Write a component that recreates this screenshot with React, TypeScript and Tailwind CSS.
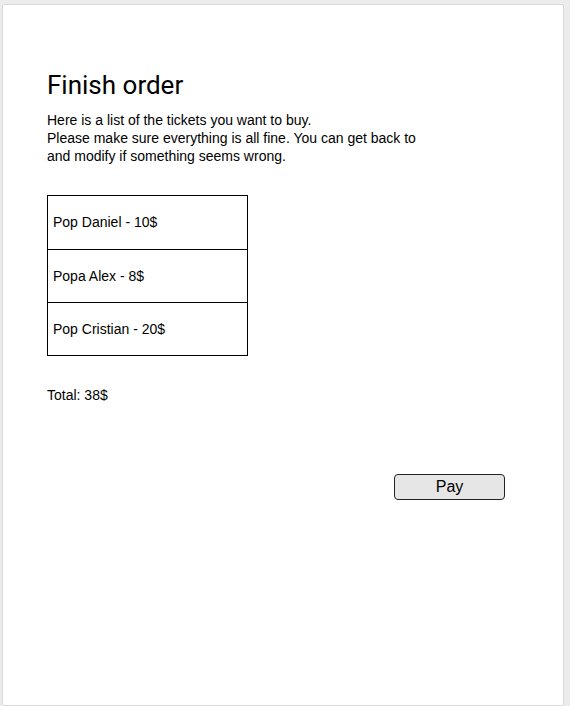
import React from 'react'

const tickets = [
  { name: 'Pop Daniel', price: 10 },
  { name: 'Popa Alex', price: 8 },
  { name: 'Pop Cristian', price: 20 },
]

export default function App(): React.ReactElement {
  const total = tickets.reduce((s, t) => s + t.price, 0)
  return (
    <div className="w-[570px] h-[706px] bg-[#ececec] pt-[4px] pl-[2px]" style={{ fontFamily: '"Liberation Sans", Arial, sans-serif' }}>
      <div className="w-[562px] h-[702px] bg-white border border-[#d9d9d9] rounded-[2px] pl-[44px] pt-[65px] text-black">
        <h1 className="text-[26px] leading-[30px] font-normal" style={{ fontFamily: 'Roboto, "Liberation Sans", sans-serif' }}>
          Finish order
        </h1>
        <p className="mt-[11px] text-[14px] leading-[18px]">
          Here is a list of the tickets you want to buy.
          <br />
          Please make sure everything is all fine. You can get back to
          <br />
          and modify if something seems wrong.
        </p>
        <div className="mt-[30px] w-[201px] border border-black">
          {tickets.map((t, i) => (
            <div
              key={t.name}
              className={`h-[53px] flex items-center pl-[5px] text-[14px] ${i > 0 ? 'border-t border-black' : ''}`}
            >
              {t.name} - {t.price}$
            </div>
          ))}
        </div>
        <div className="mt-[30px] text-[14px] leading-[18px]">Total: {total}$</div>
        <div className="mt-[70px] flex">
          <button className="ml-[347px] w-[111px] h-[26px] bg-[#e6e6e6] border border-[#222] rounded-[4px] text-[16px] leading-none">
            Pay
          </button>
        </div>
      </div>
    </div>
  )
}
